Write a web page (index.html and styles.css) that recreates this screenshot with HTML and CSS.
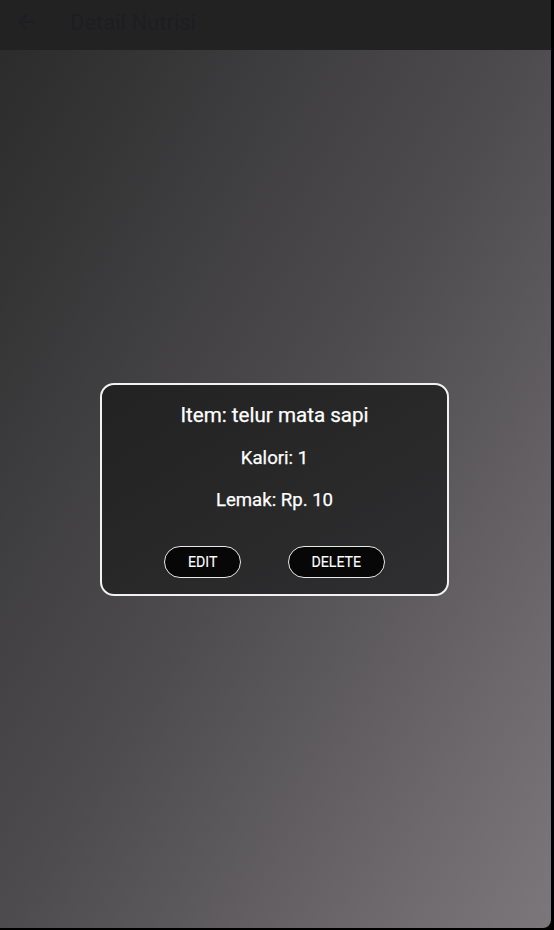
FILE: index.html
```html
<!DOCTYPE html>
<html>
<head>
<meta charset="utf-8">
<link rel="stylesheet" href="styles.css">
</head>
<body>
<div class="app">
  <header class="appbar">
    <svg class="back" width="24" height="24" viewBox="0 0 24 24"><path d="M20 11H7.83l5.59-5.59L12 4l-8 8 8 8 1.41-1.41L7.83 13H20v-2z" fill="#1d1d22"/></svg>
    <h1 class="title">Detail Nutrisi</h1>
  </header>
  <main class="content">
    <div class="card">
      <div class="item">Item: telur mata sapi</div>
      <div class="line">Kalori: 1</div>
      <div class="line">Lemak: Rp. 10</div>
      <div class="actions">
        <button class="btn">EDIT</button>
        <button class="btn">DELETE</button>
      </div>
    </div>
  </main>
</div>
</body>
</html>
```
FILE: styles.css
```css
html, body {
  margin: 0;
  padding: 0;
  background: #000;
  font-family: Roboto, "Liberation Sans", sans-serif;
}
.app {
  width: 551px;
  height: 928px;
  display: flex;
  flex-direction: column;
  background: linear-gradient(to bottom right, #2a2a2a 0%, #4d4b4e 50%, #7c777a 100%);
  border-bottom-right-radius: 8px;
  overflow: hidden;
}
.appbar {
  height: 50px;
  flex: none;
  background: #222222;
  display: flex;
  align-items: center;
  padding-left: 14px;
  box-sizing: border-box;
}
.back {
  margin-top: -6px;
}
.title {
  margin: -6px 0 0 32px;
  font-size: 22px;
  font-weight: 400;
  color: #1d1d22;
}
.content {
  flex: 1;
  display: flex;
  justify-content: center;
  padding-top: 333px;
  padding-right: 2px;
  align-items: flex-start;
}
.card {
  width: 345px;
  border: 2px solid #f2f2f2;
  border-radius: 14px;
  background: linear-gradient(to bottom right, #222222, #2f2e30);
  padding: 18px 0 16px;
  display: flex;
  flex-direction: column;
  align-items: center;
  color: #fff;
  font-weight: 400;
}
.item {
  font-size: 20.6px;
  line-height: 24px;
  -webkit-text-stroke: 0.25px #fff;
}
.line {
  font-size: 18.6px;
  line-height: 22px;
  margin-top: 20px;
  -webkit-text-stroke: 0.25px #fff;
}
.actions {
  margin-top: 35px;
  display: flex;
  gap: 47px;
}
.btn {
  height: 32px;
  padding: 0 22.5px;
  background: #070707;
  color: #fff;
  border: 1px solid #e8e8e8;
  border-radius: 16px;
  font-family: Roboto, "Liberation Sans", sans-serif;
  font-size: 14.2px;
  font-weight: 400;
  -webkit-text-stroke: 0.1px #fff;
}
```
